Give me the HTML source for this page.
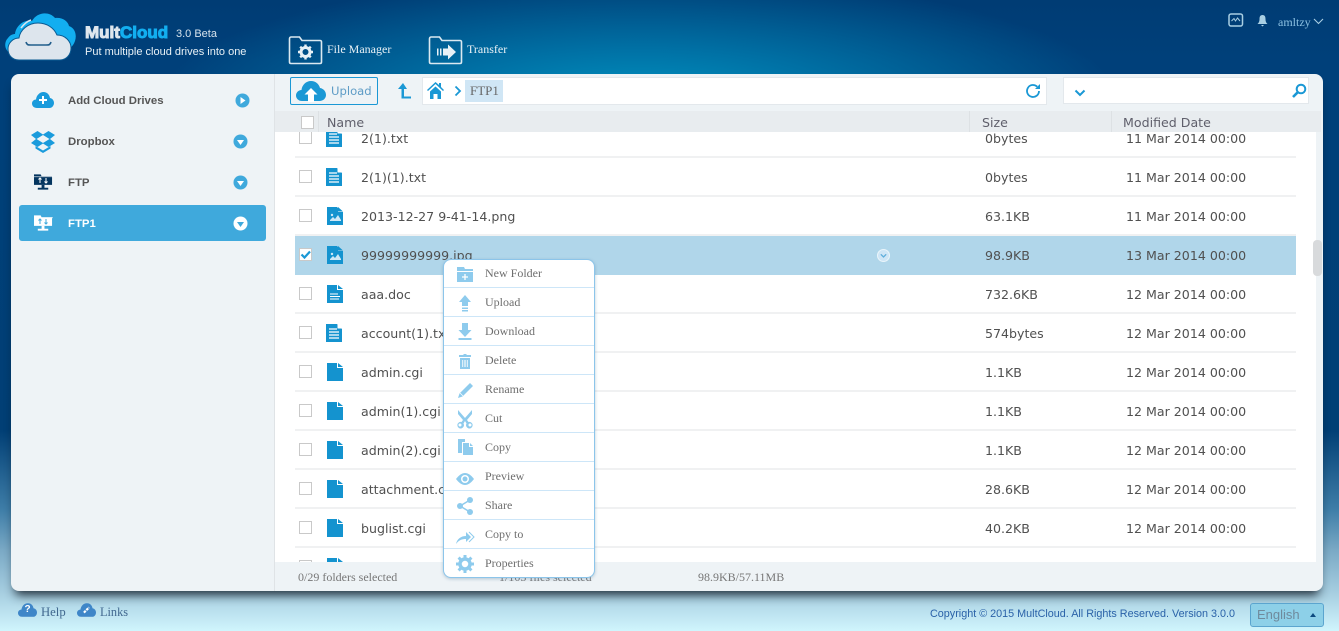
<!DOCTYPE html>
<html><head><meta charset="utf-8"><title>MultCloud</title>
<style>
*{box-sizing:border-box}
html,body{margin:0;padding:0;width:1339px;height:631px;overflow:hidden}
body{position:relative;font-family:"Liberation Sans",sans-serif;background:
radial-gradient(ellipse 480px 125px at 640px 100px,#0092c0 0%,rgba(0,130,180,.75) 40%,rgba(0,80,135,0) 100%),
linear-gradient(180deg,#003c74 0,#00407a 60px,#013f75 430px,#3f7ea8 510px,#7aa9c5 550px,#a9d0e2 595px,#d0f5fd 631px)}
.a{position:absolute}
.t{position:absolute;white-space:nowrap}
.s{font-family:"Liberation Serif",serif}
.d{font-family:"DejaVu Sans",sans-serif}
#panel{left:11px;top:74px;width:1312px;height:517px;background:#eef3f6;border-radius:8px;box-shadow:0 8px 10px -4px rgba(10,20,30,.85)}
.nav{left:68px;font:bold 11.4px "Liberation Sans",sans-serif;color:#555}
#list{left:275px;top:132px;width:1041px;height:430px;background:#fff;overflow:hidden}
.row{position:absolute;left:20px;width:1001px;height:39px;border-bottom:2px solid #f0f1f2}
.row.sel{background:#b0d6ea;border-bottom:0}
.cb{position:absolute;left:4px;top:12px;width:13px;height:13px;border:1px solid #c9c9c9;background:#fff}
.ic{position:absolute;left:31px;top:10px;width:18px;height:18px}
.row span{position:absolute;top:12px;font:12.6px/16px "DejaVu Sans",sans-serif;color:#505050;white-space:nowrap}
.n{left:66px}.z{left:690px}.m{left:831px}
#menu{left:443px;top:259px;width:152px;height:319px;background:#fff;border:1px solid #8cc5ea;border-radius:8px;box-shadow:0 1px 3px rgba(90,130,160,.4)}
.mi{position:absolute;left:0;width:150px;height:29px;margin-top:-1px;border-bottom:1px solid #cde6f8;font:12px/29px "Liberation Serif",serif;color:#6e6e6e;padding-left:41px}
.mi:last-of-type{border-bottom:0}
.mi svg{position:absolute;left:11px;top:5px;width:20px;height:20px;fill:#8ecbed}
</style></head><body>
<svg width="0" height="0" style="position:absolute"><defs>
<symbol id="ftxt" viewBox="0 0 16 18"><path d="M0 0h11l5 5v13H0z" fill="#1493cf"/><path d="M11.5 0L16 4.5h-4.5z" fill="#fff"/><path d="M3 5h8M3 8h10M3 11h10M3 14h10" stroke="#fff" stroke-width="1.2"/></symbol>
<symbol id="fimg" viewBox="0 0 16 18"><path d="M0 0h10l1 1v4h5v13H0z" fill="#1493cf"/><path d="M11 0l5 4.5h-5z" fill="#1493cf"/><path d="M3 13l3-3 2 2 3-4 3 5v1H3z" fill="#cfe8f6"/><circle cx="5" cy="8" r="1.2" fill="#cfe8f6"/></symbol>
<symbol id="fdoc" viewBox="0 0 16 18"><path d="M0 0h10v5h6v13H0z" fill="#1493cf"/><path d="M11 0l5 4h-5z" fill="#1493cf"/><path d="M3 9h8M3 11.500h10M3 14h9" stroke="#fff" stroke-width="1"/></symbol>
<symbol id="fcgi" viewBox="0 0 16 18"><path d="M0 0h10v5h6v13H0z" fill="#1493cf"/><path d="M11 0l5 4h-5z" fill="#1493cf"/></symbol>
<symbol id="cloud" viewBox="0 0 22 16"><path d="M5 16C2 16 0 14 0 11.500S2 7.500 4 7.500C4.500 3 8 0 11.500 0 15 0 17.500 2.500 18 6c2.500.5 4 2.500 4 5s-2 5-4.500 5z"/></symbol>
<symbol id="ftp" viewBox="0 0 20 18"><path d="M0 1h7l1 2h11v9H0z"/><path d="M8 12h3v3h4v2H4v-2h4z"/><path d="M0 3.500h20" stroke="#fff" stroke-width=".8" opacity=".8"/></symbol>
</defs></svg>

<!-- logo -->
<svg class="a" style="left:4px;top:10px" width="74" height="52" viewBox="0 0 74 52">
<path d="M8 44C1 42-1 33 4 28c2-3 5-4 7-4 1-9 10-15 17-13 5-9 17-10 23-3 7-1 13 3 14 8 6 2 8 9 6 15-2 6-7 9-10 9z" fill="#12aef0"/>
<path d="M17 18c3-4 7-7 10-8" stroke="#dde5ed" stroke-width="1.500" fill="none"/>
<path d="M15 50C8 50 4 45 4 39c0-6 5-11 11-11 1-8 9-15 19-15 9 0 16 5 19 12 8 0 14 6 14 13 0 7-5 12-11 12z" fill="#dde5ed" stroke="#0a5a92" stroke-width="1"/>
<path d="M22 32c1 3 2 3 5 3h15c3 0 4 0 5-3" stroke="#225e8c" stroke-width="1.600" fill="none"/>
</svg>
<div class="t" style="left:85px;top:21px;font:bold 17px/24px 'Liberation Sans',sans-serif;-webkit-text-stroke:1px;color:#dfe7ee"><span>Mult</span><span style="color:#12aef0">Cloud</span></div>
<div class="t" style="left:176px;top:26px;font:11px/16px 'Liberation Sans',sans-serif;color:#d5e2ec">3.0 Beta</div>
<div class="t" style="left:85px;top:45px;font:11px/15px 'Liberation Sans',sans-serif;color:#e8f1f6">Put multiple cloud drives into one</div>

<!-- top nav -->
<svg class="a" style="left:288px;top:35px" width="36" height="30" viewBox="0 0 36 30"><path d="M1.500 4V27c0 1 .5 1.500 1.500 1.500h29c1 0 1.500-.5 1.500-1.500V7c0-1-.5-1.500-1.500-1.500H14L11.500 2H3C2 2 1.500 3 1.500 4z" fill="none" stroke="#dbe9f1" stroke-width="1.600"/><circle cx="17.500" cy="17" r="4.500" fill="none" stroke="#e8f1f6" stroke-width="3"/><path d="M17.500 9.500v3M17.500 21.500v3M10 17h3M22 17h3M12.200 11.700l2.100 2.100M20.700 20.200l2.100 2.100M12.200 22.300l2.100-2.100M20.700 13.800l2.100-2.100" stroke="#e8f1f6" stroke-width="2.400"/></svg>
<div class="t s" style="left:327px;top:41px;font-size:12px;line-height:16px;color:#e8f1f6">File Manager</div>
<svg class="a" style="left:428px;top:35px" width="36" height="30" viewBox="0 0 36 30"><path d="M1.500 4V27c0 1 .5 1.500 1.500 1.500h29c1 0 1.500-.5 1.500-1.500V7c0-1-.5-1.500-1.500-1.500H14L11.500 2H3C2 2 1.500 3 1.500 4z" fill="none" stroke="#dbe9f1" stroke-width="1.600"/><path d="M9 13.500h1.500v7H9zM12 13.500h1.500v7H12zM15 13.500h5V9.500l8 7.500-8 7.500v-4h-5z" fill="#e8f1f6"/></svg>
<div class="t s" style="left:467px;top:41px;font-size:12px;line-height:16px;color:#e8f1f6">Transfer</div>

<!-- user -->
<svg class="a" style="left:1228px;top:13px" width="16" height="14" viewBox="0 0 16 14"><rect x="1" y="1" width="13.500" height="12" rx="2" fill="none" stroke="#a9cfe3" stroke-width="1.500"/><path d="M3.500 8L6 5.500 7.500 8 9.500 5 12 8" fill="none" stroke="#a9cfe3"/></svg>
<svg class="a" style="left:1257px;top:14px" width="11" height="13" viewBox="0 0 11 13"><path d="M5.500 1C3 1 2.500 3 2.500 5c0 3-1 4-2 5h10c-1-1-2-2-2-5 0-2-.5-4-3-4zM4 11h3l-1.500 1.500z" fill="#a9cfe3"/></svg>
<div class="t s" style="left:1278px;top:14px;font-size:12px;line-height:16px;color:#8cc2e3">amltzy</div>
<svg class="a" style="left:1313px;top:18px" width="11" height="7" viewBox="0 0 11 7"><path d="M1 1l4.500 4.500L10 1" fill="none" stroke="#a9cfe3" stroke-width="1.100"/></svg>

<div id="panel" class="a"></div>
<div class="a" style="left:274px;top:74px;width:1px;height:517px;background:#dfe3e6"></div>

<!-- sidebar -->
<svg class="a" style="left:32px;top:92px" width="22" height="16" viewBox="0 0 22 16"><use href="#cloud" fill="#1a9bdc"/><path d="M11 4v8M7 8h8" stroke="#fff" stroke-width="2"/></svg>
<div class="t nav" style="top:95px">Add Cloud Drives</div>
<svg class="a" style="left:31px;top:130px" width="24" height="23" viewBox="0 0 24 23"><g fill="#1a9bdc"><path d="M6.500 1L0 5l5 4-5 4 6.500 4L12 13.500 17.500 17 24 13l-5-4 5-4-6.500-4L12 4.500z"/><path d="M4.500 16l7.500 4.500 7.500-4.500v2.500L12 23l-7.500-4.500z"/></g><path d="M5.500 9L12 5l6.500 4L12 13z" fill="#eef3f6"/></svg>
<div class="t nav" style="top:136px">Dropbox</div>
<svg class="a" style="left:34px;top:173px;fill:#04355f" width="19" height="18"><use href="#ftp"/><path d="M6 5v5M4.500 6.500L6 5l1.500 1.500M12 5v5M10.500 8.500L12 10l1.500-1.500" stroke="#fff" fill="none"/></svg>
<div class="t nav" style="top:177px">FTP</div>
<div class="a" style="left:19px;top:205px;width:247px;height:36px;background:#3fa9dc;border-radius:3px"></div>
<svg class="a" style="left:34px;top:214px;fill:#fff" width="19" height="18"><use href="#ftp"/><path d="M6 5v5M4.500 6.500L6 5l1.500 1.500M12 5v5M10.500 8.500L12 10l1.500-1.500" stroke="#3fa9dc" fill="none"/></svg>
<div class="t nav" style="top:218px;color:#fff">FTP1</div>
<svg class="a" style="left:235px;top:93px" width="15" height="15"><circle cx="7.500" cy="7.500" r="7" fill="#3fa9dc"/><path d="M5.500 4l5 3.500-5 3.500z" fill="#fff"/></svg>
<svg class="a" style="left:233px;top:134px" width="15" height="15"><circle cx="7.500" cy="7.500" r="7" fill="#3fa9dc"/><path d="M4 6h7l-3.500 5z" fill="#fff"/></svg>
<svg class="a" style="left:233px;top:175px" width="15" height="15"><circle cx="7.500" cy="7.500" r="7" fill="#3fa9dc"/><path d="M4 6h7l-3.500 5z" fill="#fff"/></svg>
<svg class="a" style="left:233px;top:216px" width="15" height="15"><circle cx="7.500" cy="7.500" r="7" fill="#fff"/><path d="M4 6h7l-3.500 5z" fill="#3fa9dc"/></svg>

<!-- toolbar -->
<div class="a" style="left:290px;top:77px;width:88px;height:28px;border:1px solid #1a98d5;border-radius:2px"></div>
<svg class="a" style="left:296px;top:80px" width="30" height="22" viewBox="0 0 30 22"><path d="M6 21C2.500 21 0 18.500 0 15.500S2.500 10 5.500 10C6 5 10 1 15 1c4.500 0 8 3 9 7 3.500.5 6 3.500 6 7s-3 6-6.500 6z" fill="#1a98d5"/><path d="M15 8l-6.500 6.500H12V22h6v-7.500h3.500z" fill="#fff"/></svg>
<div class="t d" style="left:331px;top:83px;font-size:11.600px;line-height:16px;color:#5e9cc6">Upload</div>
<svg class="a" style="left:395px;top:82px" width="17" height="17" viewBox="0 0 17 17"><path d="M8 1L3 7h3.500v9.500H16v-2H9V7h3z" fill="#1a98d5"/></svg>
<div class="a" style="left:422px;top:77px;width:625px;height:28px;background:#fff;border:1px solid #e3e8ec"></div>
<svg class="a" style="left:427px;top:82px" width="17" height="17" viewBox="0 0 17 17"><path d="M8.500 0L0 8l1 1 7.500-7L16 9l1-1-3-3V1h-2v2z" fill="#1a98d5"/><path d="M3 9.500L8.500 4.500 14 9.500V17h-3.500v-5h-4v5H3z" fill="#1a98d5"/></svg>
<svg class="a" style="left:454px;top:85px" width="8" height="12" viewBox="0 0 8 12"><path d="M1.500 1.500L6 6l-4.500 4.500" fill="none" stroke="#1a98d5" stroke-width="1.800"/></svg>
<div class="a" style="left:465px;top:80px;width:38px;height:22px;background:#d0e6f5"></div>
<div class="t s" style="left:470px;top:83px;font-size:13px;line-height:16px;color:#666">FTP1</div>
<svg class="a" style="left:1025px;top:83px" width="16" height="16" viewBox="0 0 16 16"><path d="M14 8a6 6 0 1 1-1.800-4.300" fill="none" stroke="#1a98d5" stroke-width="1.800"/><path d="M15 1v5h-5z" fill="#1a98d5"/></svg>
<div class="a" style="left:1063px;top:77px;width:246px;height:27px;background:#fff;border:1px solid #e3e8ec"></div>
<svg class="a" style="left:1074px;top:89px" width="12" height="8" viewBox="0 0 12 8"><path d="M1.500 1.500L6 6l4.500-4.500" fill="none" stroke="#1a98d5" stroke-width="2"/></svg>
<svg class="a" style="left:1291px;top:83px" width="16" height="16" viewBox="0 0 16 16"><circle cx="10" cy="6" r="4.300" fill="none" stroke="#1a98d5" stroke-width="2"/><path d="M6.800 9.200L2 14" stroke="#1a98d5" stroke-width="2.600"/></svg>

<!-- table header -->
<div class="a" style="left:275px;top:111px;width:1046px;height:21px;background:#e8ecef"></div>
<div class="a" style="left:301px;top:116px;width:13px;height:13px;background:#fff;border:1px solid #c9c9c9"></div>
<div class="a" style="left:318px;top:111px;width:1px;height:21px;background:#dde1e4"></div>
<div class="a" style="left:969px;top:111px;width:1px;height:21px;background:#dde1e4"></div>
<div class="a" style="left:1111px;top:111px;width:1px;height:21px;background:#dde1e4"></div>
<div class="t d" style="left:327px;top:115px;font-size:12.600px;line-height:16px;color:#5f5f6b">Name</div>
<div class="t d" style="left:982px;top:115px;font-size:12.600px;line-height:16px;color:#5f5f6b">Size</div>
<div class="t d" style="left:1123px;top:115px;font-size:12.600px;line-height:16px;color:#5f5f6b">Modified Date</div>

<!-- list -->
<div id="list" class="a">
<div class="row" style="top:-13px"><div class="cb"></div><svg class="ic"><use href="#ftxt" width="16" height="18"/></svg><span class="n">2(1).txt</span><span class="z">0bytes</span><span class="m">11 Mar 2014 00:00</span></div>
<div class="row" style="top:26px"><div class="cb"></div><svg class="ic"><use href="#ftxt" width="16" height="18"/></svg><span class="n">2(1)(1).txt</span><span class="z">0bytes</span><span class="m">11 Mar 2014 00:00</span></div>
<div class="row" style="top:65px"><div class="cb"></div><svg class="ic" style="left:32px"><use href="#fimg" width="16" height="18"/></svg><span class="n">2013-12-27 9-41-14.png</span><span class="z">63.1KB</span><span class="m">11 Mar 2014 00:00</span></div>
<div class="row sel" style="top:104px"><div class="cb"><svg class="a" style="left:0;top:0" width="11" height="11" viewBox="0 0 11 11"><path d="M1.500 5.500L4.500 8.500 10 2.500" fill="none" stroke="#1a98d5" stroke-width="2.200"/></svg></div><svg class="ic" style="left:32px"><use href="#fimg" width="16" height="18"/></svg><span class="n">99999999999.jpg</span><svg class="a" style="left:581px;top:12px" width="15" height="15"><circle cx="7.500" cy="7.500" r="6" fill="#cfe6f6" stroke="#eaf5fb"/><path d="M4.800 6.300l2.700 2.700 2.700-2.700" fill="none" stroke="#5faedc" stroke-width="1.300"/></svg><span class="z">98.9KB</span><span class="m">13 Mar 2014 00:00</span></div>
<div class="row" style="top:143px"><div class="cb"></div><svg class="ic" style="left:32px"><use href="#fdoc" width="16" height="18"/></svg><span class="n">aaa.doc</span><span class="z">732.6KB</span><span class="m">12 Mar 2014 00:00</span></div>
<div class="row" style="top:182px"><div class="cb"></div><svg class="ic"><use href="#ftxt" width="16" height="18"/></svg><span class="n">account(1).txt</span><span class="z">574bytes</span><span class="m">12 Mar 2014 00:00</span></div>
<div class="row" style="top:221px"><div class="cb"></div><svg class="ic" style="left:32px"><use href="#fcgi" width="16" height="18"/></svg><span class="n">admin.cgi</span><span class="z">1.1KB</span><span class="m">12 Mar 2014 00:00</span></div>
<div class="row" style="top:260px"><div class="cb"></div><svg class="ic" style="left:32px"><use href="#fcgi" width="16" height="18"/></svg><span class="n">admin(1).cgi</span><span class="z">1.1KB</span><span class="m">12 Mar 2014 00:00</span></div>
<div class="row" style="top:299px"><div class="cb"></div><svg class="ic" style="left:32px"><use href="#fcgi" width="16" height="18"/></svg><span class="n">admin(2).cgi</span><span class="z">1.1KB</span><span class="m">12 Mar 2014 00:00</span></div>
<div class="row" style="top:338px"><div class="cb"></div><svg class="ic" style="left:32px"><use href="#fcgi" width="16" height="18"/></svg><span class="n">attachment.cgi</span><span class="z">28.6KB</span><span class="m">12 Mar 2014 00:00</span></div>
<div class="row" style="top:377px"><div class="cb"></div><svg class="ic" style="left:32px"><use href="#fcgi" width="16" height="18"/></svg><span class="n">buglist.cgi</span><span class="z">40.2KB</span><span class="m">12 Mar 2014 00:00</span></div>
<div class="row" style="top:416px"><div class="cb"></div><svg class="ic" style="left:32px"><use href="#fcgi" width="16" height="18"/></svg></div>
</div>
<div class="a" style="left:1313px;top:240px;width:9px;height:36px;background:#d8dadc;border-radius:4px"></div>

<!-- status -->
<div class="t s" style="left:298px;top:569px;font-size:12px;line-height:16px;color:#777">0/29 folders selected</div>
<div class="t s" style="left:499px;top:569px;font-size:12px;line-height:16px;color:#777">1/103 files selected</div>
<div class="t s" style="left:698px;top:569px;font-size:12px;line-height:16px;color:#777">98.9KB/57.11MB</div>

<!-- context menu -->
<div id="menu" class="a">
<div class="mi" style="top:0"><svg viewBox="0 0 20 20"><path d="M2 3h7l1 2h8v2H2zM2 8h16v10H2z"/><path d="M10 10v6M7 13h6" stroke="#fff" stroke-width="1.300"/></svg>New Folder</div>
<div class="mi" style="top:29px"><svg viewBox="0 0 20 20"><path d="M10 2L4 9h3v4h6V9h3zM7 14.500h6V16H7zM7 17h6v1.500H7z"/></svg>Upload</div>
<div class="mi" style="top:58px"><svg viewBox="0 0 20 20"><path d="M7 1h6v7h3.500L10 15 3.500 8H7zM3.500 16h13v2h-13z"/></svg>Download</div>
<div class="mi" style="top:87px"><svg viewBox="0 0 20 20"><path d="M8.500 3h3v1H16v2H4V4h4.500zM5 7h10v11H5z"/><path d="M7.500 9v7M9.200 9v7M10.800 9v7M12.500 9v7" stroke="#fff" stroke-width=".7"/></svg>Delete</div>
<div class="mi" style="top:116px"><svg viewBox="0 0 20 20"><path d="M15 3l3 3L7.500 16.500 3 18l1.500-4.500z"/><path d="M5 13l3 3" stroke="#fff" stroke-width=".7"/></svg>Rename</div>
<div class="mi" style="top:145px"><svg viewBox="0 0 20 20"><path d="M3 1l7 8 7-8v4l-5 6 1.500 2a3.300 3.300 0 1 1-2 1.500L10 12l-1.500 2.500a3.300 3.300 0 1 1-2-1.500L8 11 3 5z"/><circle cx="5" cy="16" r="1.500" fill="#fff"/><circle cx="15" cy="16" r="1.500" fill="#fff"/></svg>Cut</div>
<div class="mi" style="top:174px"><svg viewBox="0 0 20 20"><path d="M3 1h7v3H7v11H3z"/><path d="M8 5h6v4h4v8H8zM15 5l3 3h-3z"/></svg>Copy</div>
<div class="mi" style="top:203px"><svg viewBox="0 0 20 20" style="top:7px"><path d="M1 10c3-4 6-6 9-6s6 2 9 6c-3 4-6 6-9 6s-6-2-9-6z"/><circle cx="10" cy="10" r="4" fill="#fff"/><circle cx="10" cy="10" r="2.500"/></svg>Preview</div>
<div class="mi" style="top:232px"><svg viewBox="0 0 20 20"><circle cx="15" cy="4" r="3"/><circle cx="5" cy="10" r="3"/><circle cx="15" cy="16" r="3"/><path d="M15 4L5 10l10 6" fill="none" stroke="#8ecbed" stroke-width="1.500"/></svg>Share</div>
<div class="mi" style="top:261px"><svg viewBox="0 0 20 20" style="top:7px"><path d="M1 17c1-5 5-8 10-8V5l5 5-5 5v-3c-4 0-7 1-10 5z"/><path d="M14 5l5 5-5 5" fill="none" stroke="#8ecbed"/></svg>Copy to</div>
<div class="mi" style="top:290px"><svg viewBox="0 0 20 20"><circle cx="10" cy="10" r="5" fill="none" stroke="#8ecbed" stroke-width="3.500"/><path d="M10 1v4M10 15v4M1 10h4M15 10h4M3.600 3.600l2.900 2.900M13.500 13.500l2.900 2.900M3.600 16.400l2.900-2.900M13.500 6.500l2.900-2.900" stroke="#8ecbed" stroke-width="3"/></svg>Properties</div>
</div>

<!-- footer -->
<svg class="a" style="left:18px;top:603px" width="19" height="14" viewBox="0 0 22 16"><use href="#cloud" fill="#3f86c8"/></svg>
<div class="t" style="left:18px;top:604px;width:19px;text-align:center;font:bold 10px/12px 'Liberation Sans',sans-serif;color:#fff">?</div>
<div class="t s" style="left:41px;top:604px;font-size:12.700px;line-height:16px;color:#41688f">Help</div>
<svg class="a" style="left:77px;top:603px" width="19" height="14" viewBox="0 0 22 16"><use href="#cloud" fill="#3f86c8"/><path d="M8 11l6-6" stroke="#fff" stroke-width="2.500" stroke-dasharray="3 1"/></svg>
<div class="t s" style="left:100px;top:604px;font-size:12.300px;line-height:16px;color:#41688f">Links</div>
<div class="t" style="left:930px;top:607px;font-size:10.800px;line-height:14px;color:#2a62a8">Copyright © 2015 MultCloud. All Rights Reserved. Version 3.0.0</div>
<div class="a" style="left:1250px;top:603px;width:74px;height:24px;background:#8dd0e8;border:1px solid #5ba5cf;border-radius:3px"></div>
<div class="t" style="left:1257px;top:607px;font-size:13px;line-height:16px;color:#6f8a9c">English</div>
<div class="a" style="left:1310px;top:613px;width:0;height:0;border-left:3.500px solid transparent;border-right:3.500px solid transparent;border-bottom:4px solid #0d4a80"></div>
</body></html>
